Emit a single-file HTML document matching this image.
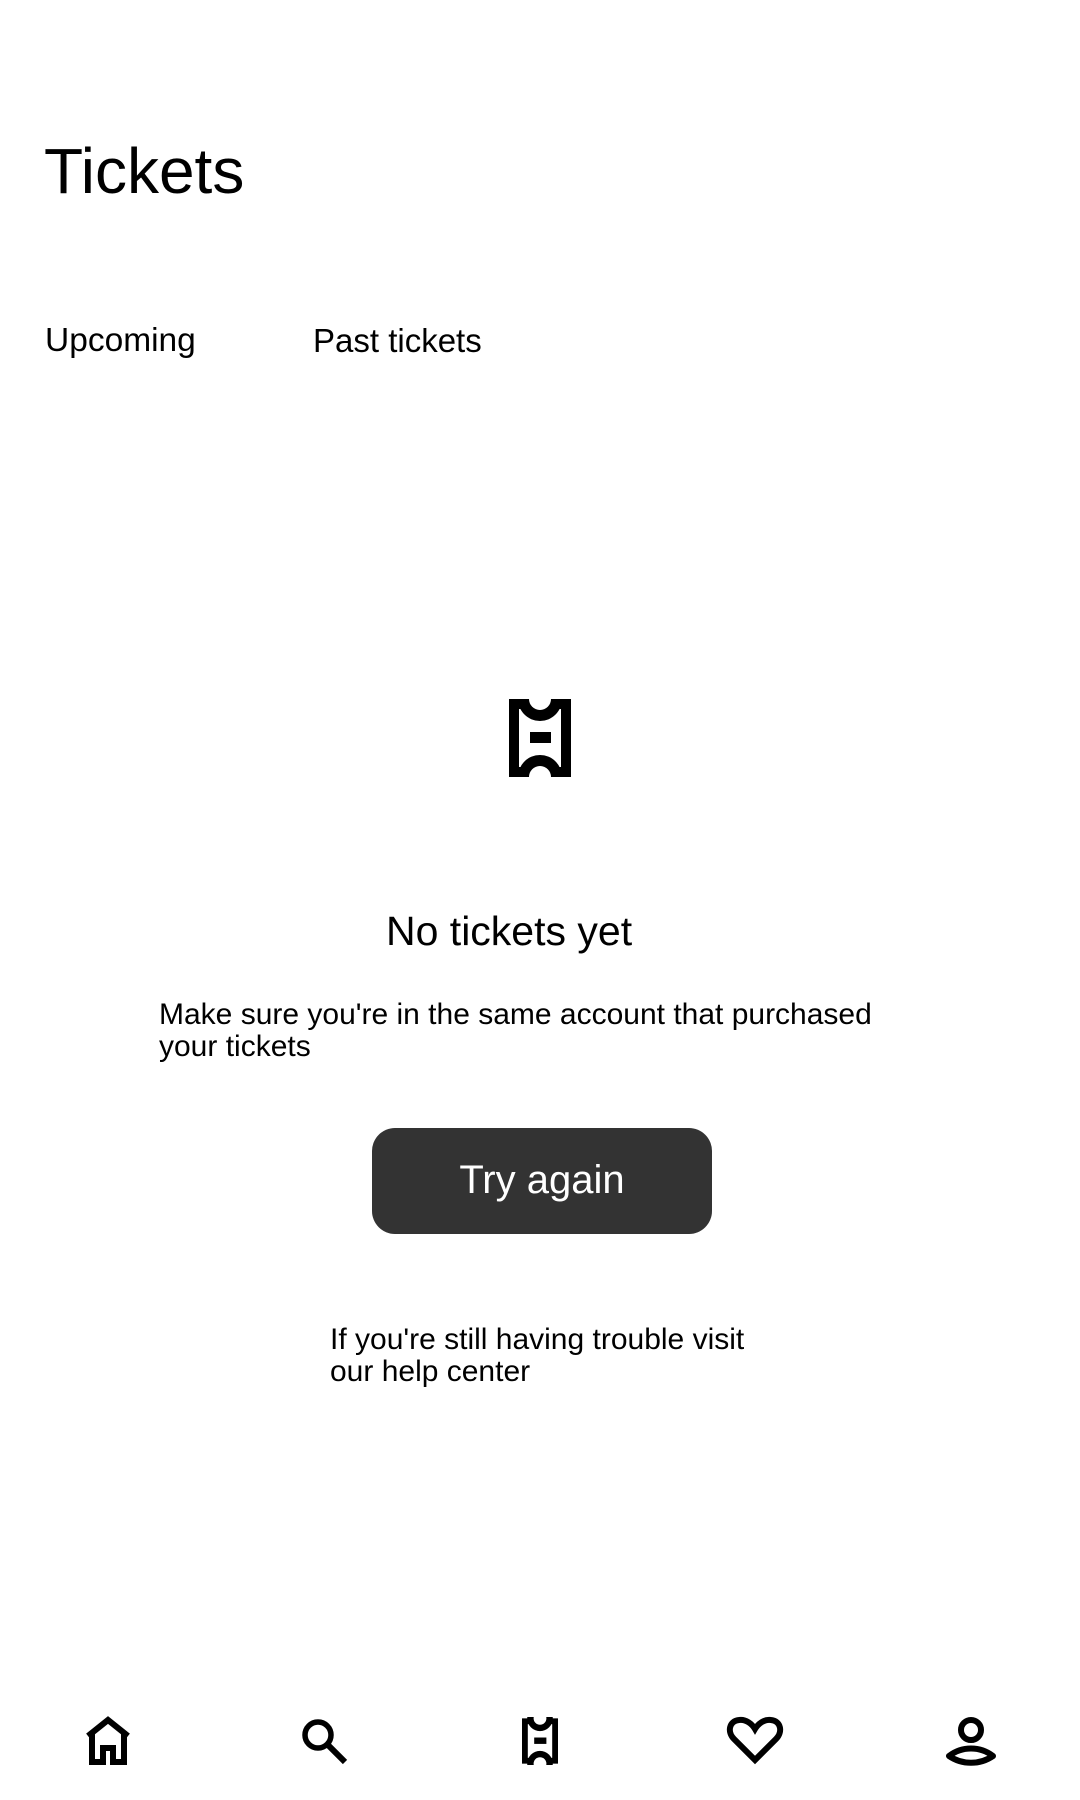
<!DOCTYPE html>
<html><head><meta charset="utf-8"><style>
html,body{margin:0;padding:0;background:#fff;}
body{width:1080px;height:1800px;position:relative;overflow:hidden;font-family:"Liberation Sans",Arial,sans-serif;color:#000;}
.a{position:absolute;white-space:nowrap;}
</style></head><body>
<svg width="0" height="0" style="position:absolute">
<defs>
<symbol id="tk" viewBox="0 0 62 78">
<rect x="0" y="0" width="62" height="78" fill="#000"/>
<rect x="10" y="10" width="42" height="58" fill="#fff"/>
<circle cx="31" cy="0" r="22" fill="#000"/>
<circle cx="31" cy="78" r="22" fill="#000"/>
<circle cx="31" cy="0" r="11" fill="#fff"/>
<circle cx="31" cy="78" r="11" fill="#fff"/>
<rect x="21" y="33" width="21" height="11" fill="#000"/>
</symbol>
</defs>
</svg>

<div class="a" style="left:44px;top:134px;font-size:64px;">Tickets</div>
<div class="a" style="left:45px;top:322px;font-size:33.5px;">Upcoming</div>
<div class="a" style="left:313px;top:322px;font-size:33px;">Past tickets</div>

<svg class="a" style="left:509px;top:699px" width="62" height="78"><use href="#tk"/></svg>

<div class="a" style="left:386px;top:908px;font-size:41px;">No tickets yet</div>
<div class="a" style="left:159px;top:999px;font-size:30px;line-height:32px;">Make sure you're in the same account that purchased<br>your tickets</div>

<div class="a" style="left:372px;top:1128px;width:340px;height:106px;border-radius:23px;background:#333;color:#fff;font-size:40px;line-height:104px;text-align:center;">Try again</div>

<div class="a" style="left:330px;top:1324px;font-size:30px;line-height:32px;">If you're still having trouble visit<br>our help center</div>

<svg class="a" style="left:84px;top:1716px" width="48" height="50" viewBox="0 0 48 50">
<path d="M4 20 L24 4 L44 20 M8 17 V46 H19 V32 H29 V46 H40 V17" fill="none" stroke="#000" stroke-width="6" stroke-linejoin="miter"/>
</svg>
<svg class="a" style="left:300px;top:1717px" width="50" height="50" viewBox="0 0 50 50">
<circle cx="18" cy="18" r="13" fill="none" stroke="#000" stroke-width="5.5"/>
<path d="M27.5 27.5 L45 45" stroke="#000" stroke-width="6"/>
</svg>
<svg class="a" style="left:522px;top:1717px" width="36" height="48"><use href="#tk"/></svg>
<svg class="a" style="left:726px;top:1715px" width="58" height="50" viewBox="0 0 58 50">
<path d="M29 45 L8 24 C1 17 3 6 13 5 C20 4 26 9 29 14 C32 9 38 4 45 5 C55 6 57 17 50 24 Z" fill="none" stroke="#000" stroke-width="6" stroke-linejoin="miter"/>
</svg>
<svg class="a" style="left:946px;top:1716px" width="50" height="50" viewBox="0 0 50 50">
<circle cx="25" cy="14" r="10" fill="none" stroke="#000" stroke-width="6"/>
<path d="M3 40 C16 30 34 30 47 40 C34 49 16 49 3 40 Z" fill="none" stroke="#000" stroke-width="6" stroke-linejoin="round"/>
</svg>
</body></html>
